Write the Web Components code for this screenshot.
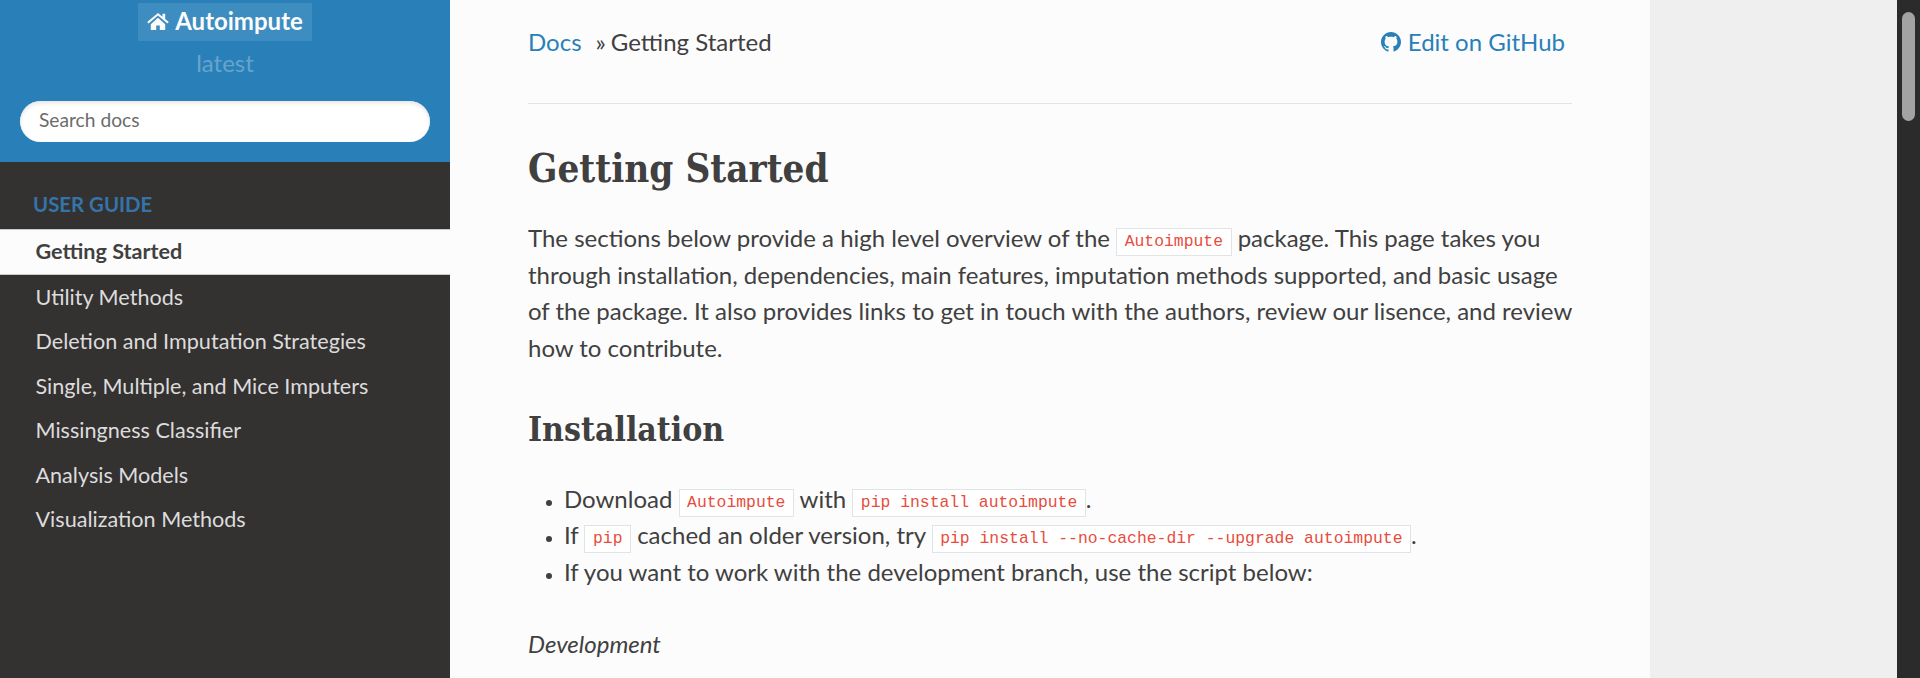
<!DOCTYPE html>
<html><head><meta charset="utf-8"><style>
html,body{margin:0;padding:0;height:678px;overflow:hidden;background:#efefef}
body{font-family:Lato,"Liberation Sans",sans-serif}
</style></head><body>
<rtd-page></rtd-page>
<script>
function def(name,html){customElements.define(name,class extends HTMLElement{constructor(){super();this.attachShadow({mode:'open'}).innerHTML=html}})}
def('rtd-page',`<style>:host{display:grid;grid-template-columns:450px 1200px 1fr 23px;height:678px;overflow:hidden}
.gap{background:#efefef}.bar{background:#2b2b2b;padding:12px 5px 0 5px;box-sizing:border-box}
.thumb{height:109px;background:#a3a3a3;border-radius:7px}</style>
<rtd-sidebar></rtd-sidebar><rtd-content></rtd-content><div class="gap"></div><div class="bar"><div class="thumb"></div></div>`);
def('rtd-sidebar',`<style>:host{display:block;background:#343131;height:678px;overflow:hidden;font-family:Lato,"Liberation Sans",sans-serif}
.top{background:#2980b9;height:162px;display:flex;flex-direction:column;align-items:center;box-sizing:border-box;padding-top:3px}
.home{background:rgba(255,255,255,.1);color:#fcfcfc;font-weight:700;font-size:24px;padding:0 9px 3px;height:38px;box-sizing:border-box;display:flex;align-items:center;gap:6px}
.ver{color:rgba(255,255,255,.3);font-size:24px;margin-top:8px;line-height:28px}
.s{box-sizing:border-box;width:410px;height:41px;margin-top:24px;border-radius:50px;background:#fff;box-shadow:inset 0 2px 4px #e4e4e4;color:#6b6b6b;font-size:19.200px;line-height:38px;padding-left:19px}
.cap{color:#3574a8;font-weight:700;font-size:20.400px;text-transform:uppercase;padding:0 33px;line-height:30px;margin-top:27px;height:40px}
a{display:block;color:#dcdcdc;font-size:21.600px;padding:0 35.500px;height:44.400px;line-height:44.400px}
a.cur{background:#fcfcfc;color:#404040;font-weight:700;height:44px;line-height:42px;border-top:1.500px solid #c9c9c9;border-bottom:1.500px solid #c9c9c9}
</style>
<div class="top"><div class="home"><svg width="22" height="18" viewBox="0 0 24 20"><path fill="#fcfcfc" d="M12 1 0 11l1.500 1.800L12 4l10.500 8.800L24 11l-4-3.300V2h-3v3.200zM4 13.500V20h6v-5h4v5h6v-6.500L12 6.500z"/></svg>Autoimpute</div><div class="ver">latest</div><div class="s">Search docs</div></div>
<div class="cap">User Guide</div>
<a class="cur">Getting Started</a><a>Utility Methods</a><a>Deletion and Imputation Strategies</a><a>Single, Multiple, and Mice Imputers</a><a>Missingness Classifier</a><a>Analysis Models</a><a>Visualization Methods</a>`);
def('rtd-code',`<style>:host{display:inline-block;font-family:"Liberation Mono","DejaVu Sans Mono",monospace;font-size:16.400px;line-height:20px;color:#e74c3c;background:#fff;border:1.500px solid #e1e4e5;padding:3px 7.500px;vertical-align:1px;margin:0}</style><slot></slot>`);
def('rtd-content',`<style>:host{display:block;background:#fcfcfc;height:678px;overflow:hidden;box-sizing:border-box;padding:0 78px;color:#404040;font-family:Lato,"Liberation Sans",sans-serif;font-size:24px;line-height:36px}
.crumbs{display:flex;justify-content:space-between;border-bottom:1.500px solid #e1e4e5;padding-top:24px;height:79px}
a,.git{color:#2980b9}.git{display:flex;align-items:center;gap:7px;height:36px;padding-right:7px}
.sep{margin:0 5px 0 14px}
h1,h2{font-family:"DejaVu Serif Condensed","DejaVu Serif","Liberation Serif",serif;font-stretch:condensed;font-weight:700;margin:0;color:#404040}
h1{font-size:38.300px;line-height:52px;margin-top:39px;margin-bottom:25px}
h2{font-size:33.500px;line-height:44px;margin-top:42px;margin-bottom:28.500px}
p{margin:0 -4px 0 0;line-height:36.500px}ul{margin:0;padding-left:36px}li{height:36.500px}li::marker{font-size:17px}
em{display:block;margin-top:36px}
</style>
<div class="crumbs"><div><a>Docs</a><span class="sep">»</span>Getting Started</div><div class="git"><svg width="20" height="20" viewBox="0 0 16 16"><path fill="#2980b9" d="M8 0C3.600 0 0 3.600 0 8c0 3.500 2.300 6.500 5.500 7.600.4.100.5-.2.500-.4v-1.400c-2.200.5-2.700-1-2.700-1-.4-.9-.9-1.200-.9-1.200-.7-.5.100-.5.100-.5.800.1 1.200.8 1.200.8.700 1.200 1.900.9 2.300.7.100-.5.300-.9.500-1.100-1.800-.2-3.600-.9-3.600-4 0-.9.300-1.600.8-2.100-.1-.2-.4-1 .1-2.100 0 0 .7-.2 2.200.8.600-.2 1.300-.3 2-.3s1.400.1 2 .3c1.500-1 2.200-.8 2.200-.8.400 1.100.2 1.900.1 2.100.5.600.8 1.300.8 2.100 0 3.100-1.900 3.700-3.700 3.900.3.300.6.800.6 1.500v2.200c0 .2.100.5.600.4C13.700 14.500 16 11.500 16 8c0-4.400-3.600-8-8-8z"/></svg>Edit on GitHub</div></div>
<h1>Getting Started</h1>
<p>The sections below provide a high level overview of the <rtd-code>Autoimpute</rtd-code> package. This page takes you through installation, dependencies, main features, imputation methods supported, and basic usage of the package. It also provides links to get in touch with the authors, review our lisence, and review how to contribute.</p>
<h2>Installation</h2>
<ul><li>Download <rtd-code>Autoimpute</rtd-code> with <rtd-code>pip install autoimpute</rtd-code>.</li><li>If <rtd-code>pip</rtd-code> cached an older version, try <rtd-code>pip install --no-cache-dir --upgrade autoimpute</rtd-code>.</li><li>If you want to work with the development branch, use the script below:</li></ul>
<em>Development</em>`);
</script></body></html>
